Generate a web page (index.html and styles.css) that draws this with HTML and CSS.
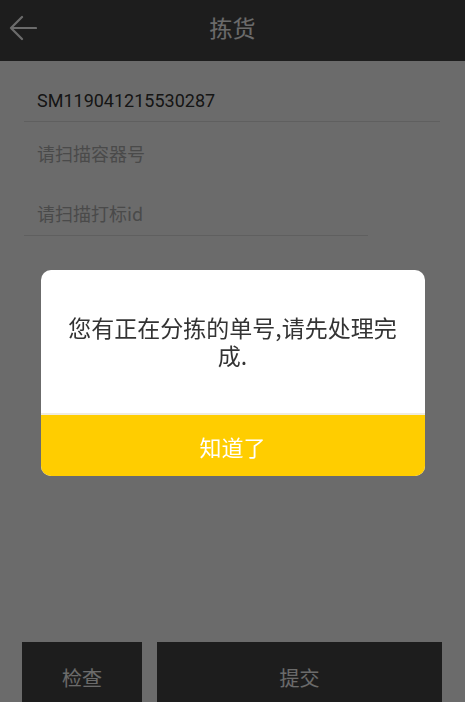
FILE: index.html
```html
<!DOCTYPE html>
<html lang="zh-CN">
<head>
<meta charset="utf-8">
<title>拣货</title>
<link rel="stylesheet" href="styles.css">
</head>
<body>
<div class="page">
  <header class="topbar">
    <button class="back" aria-label="返回">
      <svg width="28" height="26" viewBox="0 0 28 26"><path d="M27 13H2M13 2L2 13l11 11" fill="none" stroke="#ffffff" stroke-width="2.2" stroke-linecap="round" stroke-linejoin="round"/></svg>
    </button>
    <h1 class="title">拣货</h1>
  </header>
  <main class="form">
    <div class="row row-order">SM119041215530287</div>
    <div class="row row-container placeholder">请扫描容器号</div>
    <div class="row row-mark placeholder">请扫描打标id</div>
  </main>
  <footer class="actions">
    <button class="btn btn-check">检查</button>
    <button class="btn btn-submit">提交</button>
  </footer>
</div>
<div class="overlay">
  <div class="dialog">
    <p class="dialog-msg">您有正在分拣的单号,请先处理完成.</p>
    <button class="dialog-btn">知道了</button>
  </div>
</div>
</body>
</html>
```
FILE: styles.css
```css
html, body {
  margin: 0;
  padding: 0;
  overflow: hidden;
  height: 702px;
}
body {
  font-family: Roboto, "Noto Sans CJK SC", sans-serif;
  background: #ffffff;
}
.page {
  height: 712px;
  display: flex;
  flex-direction: column;
}
.topbar {
  height: 61px;
  flex: none;
  background: #474747;
  display: flex;
  align-items: center;
  justify-content: center;
  position: relative;
}
.back {
  position: absolute;
  left: 9px;
  top: 15px;
  padding: 0;
  border: 0;
  background: none;
  display: flex;
}
.title {
  margin: 0;
  font-size: 23px;
  font-weight: normal;
  color: #ffffff;
  font-family: "Noto Sans CJK SC", sans-serif;
  margin-top: -7px;
}
.form {
  flex: 1;
  padding: 18px 25px 0 24px;
  display: flex;
  flex-direction: column;
}
.row {
  display: flex;
  align-items: center;
  padding-left: 13px;
  font-size: 18px;
}
.row-order {
  height: 42px;
  color: #333333;
  border-bottom: 1px solid #e2e2e2;
}
.row-container {
  height: 62px;
}
.row-mark {
  height: 44px;
  margin-top: 7px;
  margin-right: 72px;
  border-bottom: 1px solid #e2e2e2;
}
.placeholder {
  color: #b0b0b0;
  font-family: "Noto Sans CJK SC", sans-serif;
  font-size: 18px;
}
.actions {
  flex: none;
  display: flex;
  gap: 15px;
  padding: 0 23px 0 22px;
}
.btn {
  height: 70px;
  border: 0;
  background: #474747;
  color: #ffffff;
  font-family: "Noto Sans CJK SC", sans-serif;
  font-size: 20px;
  padding: 0;
}
.btn-check {
  width: 120px;
}
.btn-submit {
  flex: 1;
}
.overlay {
  position: fixed;
  inset: 0;
  background: rgba(0, 0, 0, 0.58);
  display: flex;
  justify-content: center;
  padding-top: 270px;
  align-items: flex-start;
}
.dialog {
  width: 384px;
  background: #ffffff;
  border-radius: 10px;
  overflow: hidden;
  display: flex;
  flex-direction: column;
}
.dialog-msg {
  margin: 0;
  height: 145px;
  box-sizing: border-box;
  padding: 43px 20px 0;
  text-align: center;
  font-size: 23px;
  line-height: 28px;
  color: #333333;
  font-family: "Noto Sans CJK SC", sans-serif;
  border-bottom: 2px solid #f0ece0;
}
.dialog-btn {
  height: 61px;
  border: 0;
  background: #ffcd00;
  color: #ffffff;
  font-family: "Noto Sans CJK SC", sans-serif;
  font-size: 22px;
  padding: 0;
}
```
